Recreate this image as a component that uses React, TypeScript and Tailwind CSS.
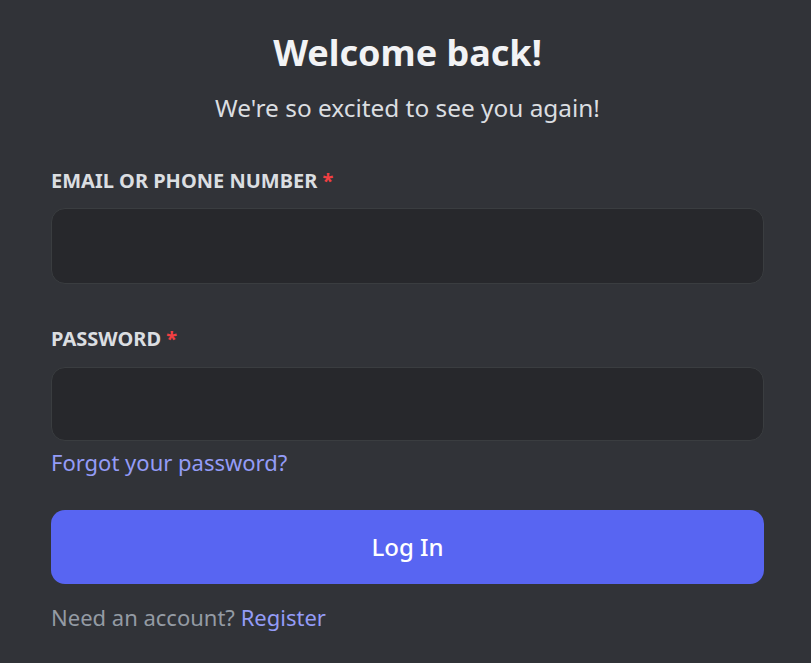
export default function App() {
  return (
    <div
      className="min-h-[663px] w-full bg-[#313338] pl-[51px] pr-[47px] pt-[29px]"
      style={{ fontFamily: '"Noto Sans", "Open Sans", sans-serif' }}
    >
      {/* Header */}
      <h1 className="text-center text-[36px] font-bold leading-[48px] text-[#f2f3f5]">
        Welcome back!
      </h1>
      <p className="mt-[15px] text-center text-[24.4px] leading-[32px] text-[#dbdee1]">
        We're so excited to see you again!
      </p>

      {/* Email */}
      <label className="mt-[45px] block text-[20px] font-bold leading-[24px] text-[#dbdee1]">
        EMAIL OR PHONE NUMBER <span className="text-[#f23f42]">*</span>
      </label>
      <input
        type="text"
        className="mt-[15px] block h-[76px] w-full rounded-[14px] border border-[#3a3d40] bg-[#27282c] px-4 text-[22px] text-[#dbdee1] outline-none"
      />

      {/* Password */}
      <label className="mt-[43px] block text-[20px] font-bold leading-[24px] text-[#dbdee1]">
        PASSWORD <span className="text-[#f23f42]">*</span>
      </label>
      <input
        type="password"
        className="mt-[16px] block h-[74px] w-full rounded-[14px] border border-[#3a3d40] bg-[#27282c] px-4 text-[22px] text-[#dbdee1] outline-none"
      />
      <a className="mt-[7px] block text-[22px] leading-[28px] text-[#949cf7]">
        Forgot your password?
      </a>

      {/* Submit */}
      <button className="mt-[34px] flex h-[74px] w-full items-center justify-center rounded-[14px] bg-[#5865f2] text-[24px] font-medium text-white">
        Log In
      </button>

      <p className="mt-[19px] text-[22px] leading-[28px] text-[#949ba4]">
        Need an account? <a className="text-[#949cf7]">Register</a>
      </p>
    </div>
  );
}
